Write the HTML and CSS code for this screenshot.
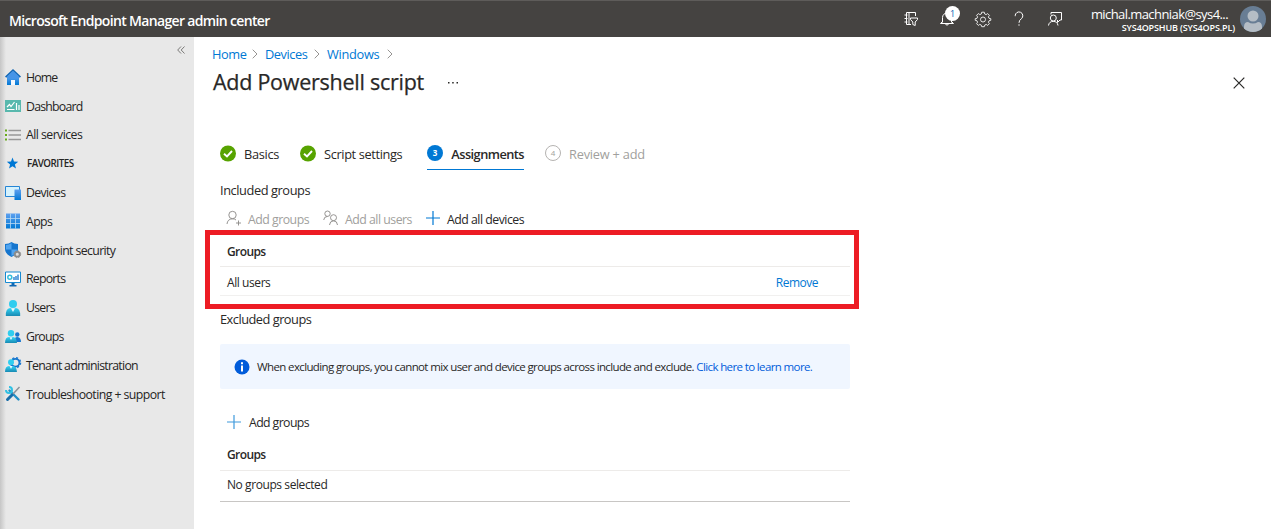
FILE: index.html
```
<!DOCTYPE html>
<html lang="en">
<head>
<meta charset="utf-8">
<title>Add Powershell script - Microsoft Endpoint Manager admin center</title>
<link rel="stylesheet" href="styles.css">
</head>
<body>
<header class="topbar">
  <div class="brand">Microsoft Endpoint Manager admin center</div>
  <div class="tools">
    <svg class="tool" viewBox="0 0 18 18"><path d="M13.5 6V2.5H4.500V14.500H9M7 2.500V14.500M2.500 5H5.500M2.500 8.500H5.500M2.500 12H5.500M8.500 8H15.500V9.500L13.200 12V15.500L10.800 14.500V12L8.500 9.500Z"/></svg>
    <div class="bell"><svg class="tool" viewBox="0 0 18 18"><path d="M4.500 12.500V7.500A4.500 4.500 0 0 1 13.500 7.500V12.500M2.500 13.500L4.500 11.500M15.500 13.500L13.500 11.500M2.500 13.500H15.500M7.500 14A1.600 1.600 0 0 0 10.500 14"/></svg><span class="badge">1</span></div>
    <svg class="tool gear" viewBox="0 0 18 18"><path d="M7.700 2.200H10.300L10.700 4L12.100 4.600L13.700 3.600L15.400 5.300L14.400 6.900L15 8.300L16.800 8.700V10.300L15 10.800L14.400 12.200L15.400 13.700L13.700 15.400L12.200 14.400L10.800 15L10.300 16.700H7.700L7.200 15L5.800 14.400L4.300 15.400L2.600 13.700L3.600 12.200L3 10.800L1.200 10.300V8.700L3 8.300L3.600 6.900L2.600 5.300L4.300 3.600L5.900 4.600L7.300 4Z"/><circle cx="9" cy="9.500" r="2.500"/></svg>
    <svg class="tool" viewBox="0 0 18 18"><path d="M5.200 6.200V5.800A3.800 3.800 0 1 1 11.500 8.600Q9 10.300 9 12.800M9 14.300V15.700"/></svg>
    <svg class="tool" viewBox="0 0 18 18"><circle cx="7.300" cy="8" r="3"/><path d="M2.500 15.500A4.800 4.800 0 0 1 12 15.500M5 4.500V2.500H15.500V10H14L11.500 12.500V10"/></svg>
  </div>
  <div class="account"><div class="mail">michal.machniak@sys4...</div><div class="tenant">SYS4OPSHUB (SYS4OPS.PL)</div></div>
  <svg class="avatar" viewBox="0 0 26 26"><defs><clipPath id="disc"><circle cx="13" cy="13" r="13"/></clipPath></defs><g clip-path="url(#disc)"><path fill="#687d94" d="M0 0H26V26H0Z"/><circle cx="13" cy="10" r="5.500" fill="#b5bdc5"/><path fill="#b5bdc5" d="M4 26V21Q4 16 8 16Q13 19 18 16Q22 16 22 21V26Z"/></g></svg>
</header>
<div class="shell">
  <nav class="sidebar">
    <svg class="collapse" viewBox="0 0 8 8"><path d="M4 .5L.7 4L4 7.500M7.500 .5L4.200 4L7.500 7.500"/></svg>
    <svg width="0" height="0" class="defs"><defs>
      <linearGradient id="blue" x2="0" y2="1"><stop stop-color="#5ea0ef"/><stop offset="1" stop-color="#0078d4"/></linearGradient>
      <linearGradient id="cyan" x2="0" y2="1"><stop stop-color="#32d4f5"/><stop offset="1" stop-color="#198ab3"/></linearGradient>
    </defs></svg>
    <a class="item"><svg viewBox="0 0 16 16"><path fill="url(#blue)" d="M2 7H14V16H10V11H6V16H2Z"/><path fill="#1267b4" d="M8 0L16 7.500L14.800 8.800L8 2.500L1.200 8.800L0 7.500Z"/><path fill="#4594e7" d="M8 1.700L14 7.500V9H2V7.500Z"/><path fill="#f5f9fe" d="M6 11H10V16H6Z"/></svg><span class="n-home">Home</span></a>
    <a class="item"><svg viewBox="0 0 16 16"><path fill="#58b8ad" d="M0 2H16V14H0Z"/><path stroke="#fff" fill="none" d="M2 9L4.500 6.500L6 8.500L9.500 4M2 11.500H9.500M11.500 5V12M14 7V12" stroke-width="1.200"/></svg><span class="n-dash">Dashboard</span></a>
    <a class="item"><svg viewBox="0 0 16 16"><path stroke="#979797" stroke-width="1.300" d="M3.500 3.500H16M3.500 8H16M3.500 12.500H16"/><path stroke="#68a91c" stroke-width="2" d="M0 3.500H2M0 8H2M0 12.500H2"/></svg><span class="n-serv">All services</span></a>
    <div class="item fav"><svg viewBox="0 0 16 16"><path fill="#0078d4" d="M7.500 1.500L9 5.500L13.200 5.800L9.900 8.400L11 12.500L7.500 10.200L4 12.500L5.100 8.400L1.800 5.800L6 5.500Z"/></svg><span>FAVORITES</span></div>
    <a class="item"><svg viewBox="0 0 16 16"><path fill="#d5f2fd" stroke="#2585d5" d="M.5 1.500H14.500V11.500H.5Z"/><path fill="url(#blue)" d="M9.500 4.500H16V15H9.500Z"/></svg><span class="n-dev">Devices</span></a>
    <a class="item"><svg viewBox="0 0 16 16"><path fill="url(#blue)" d="M1 .5H15V15.500H1Z"/><path stroke="#b9d9f3" stroke-width=".8" d="M5.500 .5V15.500M10.500 .5V15.500M1 5.500H15M1 10.500H15"/></svg><span class="n-apps">Apps</span></a>
    <a class="item"><svg viewBox="0 0 16 16"><path fill="#1676ce" d="M6.500 0Q9 2 13 2V7Q13 12 6.500 15Q0 12 0 7V2Q4 2 6.500 0"/><path fill="#50a4ef" d="M6.500 1V7.500H1V3Q4 3 6.500 1M6.500 7.500H12Q12 11 6.500 14Z"/><circle cx="12.300" cy="12.300" r="2.400" fill="#ddd" stroke="#8b8b8b" stroke-width="1.700"/><circle cx="12.300" cy="12.300" r="3.400" fill="none" stroke="#8b8b8b" stroke-width="1" stroke-dasharray="1.500 1.170"/></svg><span class="n-sec">Endpoint security</span></a>
    <a class="item"><svg viewBox="0 0 16 16"><path fill="#fff" stroke="#168ad2" d="M.5 1H15.500V11.500H.5Z"/><circle cx="4.800" cy="6.200" r="2" fill="none" stroke="#35bddb" stroke-width="1.500"/><path stroke="#1676ce" stroke-width="1.300" d="M9 9V6M11 9V5M13 9V3.500"/><path fill="#0f68b4" d="M6.500 12H9.500V14H11.500V15.500H4.500V14H6.500Z"/></svg><span class="n-rep">Reports</span></a>
    <a class="item"><svg viewBox="0 0 16 16"><circle cx="8" cy="4" r="4" fill="#30cdef"/><path fill="url(#cyan)" d="M.8 16Q.5 8.500 5 8L8 9L11 8Q15.500 8.500 15.200 16Z"/><path fill="#e8fbff" d="M6 8.500H10L8 12Z"/></svg><span class="n-users">Users</span></a>
    <a class="item"><svg viewBox="0 0 16 16"><circle cx="12.300" cy="5.500" r="2.200" fill="#1676ce"/><path fill="#1676ce" d="M8.500 13Q9 8 12.500 8Q16 8.500 16 13Z"/><circle cx="6" cy="4.300" r="3.200" fill="#30cdef"/><path fill="url(#cyan)" d="M0 14Q0 8 4 8H8Q11.500 8 12 14Z"/><path fill="#e8fbff" d="M4.500 8.200H7.500L6 11Z"/></svg><span class="n-grp">Groups</span></a>
    <a class="item"><svg viewBox="0 0 16 16"><circle cx="10.500" cy="5.700" r="3.900" fill="none" stroke="#1676ce" stroke-width="1.800"/><circle cx="10.500" cy="5.700" r="5" fill="none" stroke="#1676ce" stroke-width="1.500" stroke-dasharray="2 1.930"/><circle cx="6" cy="5.200" r="3" fill="#30cdef"/><path fill="url(#cyan)" d="M0 15Q0 9 4 9H8Q11.500 9 12 15Z"/><path fill="#e8fbff" d="M4.500 9H7.500L6 12Z"/></svg><span class="n-ten">Tenant administration</span></a>
    <a class="item"><svg viewBox="0 0 16 16"><path fill="none" stroke="#228fc6" stroke-width="2.400" stroke-linecap="round" d="M4.500 4.500L13.500 13.500"/><path fill="none" stroke="#2fc1e4" stroke-width="2" d="M4 1A3 3 0 1 1 1 4"/><path stroke="#8a9299" stroke-width="1.500" d="M14.500 1L8 8"/><path stroke="#186da9" stroke-width="3" stroke-linecap="round" d="M7 9L2.500 13.500"/></svg><span class="n-tro">Troubleshooting + support</span></a>
  </nav>
  <main class="content">
    <div class="crumbs"><a class="c1">Home</a><svg viewBox="0 0 6 10"><path d="M.7 .7L5 5L.7 9.300"/></svg><a class="c2">Devices</a><svg viewBox="0 0 6 10"><path d="M.7 .7L5 5L.7 9.300"/></svg><a class="c3">Windows</a><svg viewBox="0 0 6 10"><path d="M.7 .7L5 5L.7 9.300"/></svg></div>
    <div class="titlebar"><h1>Add Powershell script</h1><svg class="more" viewBox="0 0 12 4"><path d="M1 1H2.500V2.500H1ZM5.200 1H6.700V2.500H5.200ZM9.500 1H11V2.500H9.500Z"/></svg><svg class="close" viewBox="0 0 12 12"><path d="M.7 .7L11.300 11.300M11.300 .7L.7 11.300"/></svg></div>
    <div class="form">
      <div class="steps">
        <div class="step s1"><svg viewBox="0 0 16 16"><circle cx="8" cy="7.500" r="8" fill="#57a300"/><path d="M4 7.700L7 10.500L12 5" fill="none" stroke="#fff" stroke-width="1.900"/></svg><span>Basics</span></div>
        <div class="step s2"><svg viewBox="0 0 16 16"><circle cx="8" cy="7.500" r="8" fill="#57a300"/><path d="M4 7.700L7 10.500L12 5" fill="none" stroke="#fff" stroke-width="1.900"/></svg><span class="t-script">Script settings</span></div>
        <div class="step s3 active"><i>3</i><span>Assignments</span></div>
        <div class="step s4 pending"><i>4</i><span>Review + add</span></div>
      </div>
      <div class="heading"><span class="t-inc">Included groups</span></div>
      <div class="actions">
        <div class="act a1 off"><svg viewBox="0 0 16 16"><circle cx="6.500" cy="4" r="3.700"/><path d="M1 13Q1.500 8 6.500 7.800Q8.700 7.800 10 9M12.500 9.500V14.500M10 12H15"/></svg><span class="t-ag">Add groups</span></div>
        <div class="act a2 off"><svg viewBox="0 0 16 16"><circle cx="4.500" cy="2.700" r="2.700"/><path d="M.7 9Q1 5.500 4.500 5.400M6.500 14Q6.800 10 10.500 9.800Q14.300 10 14.500 14"/><circle cx="10.500" cy="6.700" r="3"/></svg><span class="t-au">Add all users</span></div>
        <div class="act a3"><svg class="plus" viewBox="0 0 14 14"><path d="M7 -1V13M0 6H14"/></svg><span class="t-ad">Add all devices</span></div>
      </div>
      <section class="table included">
        <div class="th"><span class="t-g">Groups</span></div>
        <div class="tr"><span class="t-all">All users</span><a class="t-rem">Remove</a></div>
        <div class="highlight"></div>
      </section>
      <div class="heading exhead"><span class="t-exc">Excluded groups</span></div>
      <div class="info"><svg viewBox="0 0 16 16"><circle cx="8" cy="8" r="7.500" fill="#015cda"/><path fill="#fff" d="M7 3.200H9V5.200H7ZM7 6.500H9V12.500H7Z"/></svg><span>When excluding groups, you cannot mix user and device groups across include and exclude. <a>Click here to learn more.</a></span></div>
      <div class="act addex"><svg class="plus light" viewBox="0 0 14 14"><path d="M7 0V14M0 7H14"/></svg><span class="t-ag">Add groups</span></div>
      <section class="table excluded">
        <div class="th"><span class="t-g">Groups</span></div>
        <div class="tr"><span class="t-no">No groups selected</span></div>
      </section>
    </div>
  </main>
</div>
</body>
</html>
```
FILE: styles.css
```
* { box-sizing: border-box; }
body { margin: 0; width: 1271px; height: 529px; overflow: hidden; background: #fff; color: #292827; font: 12.300px "Open Sans", "Noto Sans", sans-serif; white-space: nowrap; letter-spacing: -.3px; }
svg { display: block; flex: none; overflow: visible; }
a { color: #0078d4; text-decoration: none; }
.topbar { height: 37px; display: flex; align-items: center; background: #454341; border-top: 1px solid #5e5c5a; color: #fff; padding-right: 5px; }
.brand { width: 902px; padding: 2px 0 0 9px; font-size: 14px; font-weight: 600; letter-spacing: -.66px; }
.tools { display: flex; gap: 18px; }
.tool { width: 18px; height: 18px; fill: none; stroke: #fff; stroke-width: 1; }
.gear { stroke-width: .85; }
.bell { position: relative; }
.badge { position: absolute; left: 7px; top: -4px; width: 15px; height: 15px; border-radius: 50%; background: #fff; color: #0064b5; text-align: center; font-size: 9px; line-height: 15px; letter-spacing: 0; }
.account { margin-left: auto; padding: 2px 5px 0 0; text-align: right; }
.mail { font-size: 13px; line-height: 16px; letter-spacing: -.58px; padding-right: 7px; }
.tenant { font-size: 9px; line-height: 12px; font-weight: 600; letter-spacing: -.13px; }
.avatar { width: 26px; height: 26px; }
.shell { display: flex; height: 492px; }
.sidebar { width: 194px; background: linear-gradient(90deg, #c6c6c6, #e8e8e8 6px); }
.collapse { width: 8px; height: 8px; margin: 9px 0 9px 177px; fill: none; stroke: #605e5c; stroke-width: .8; }
.defs { position: absolute; }
.item { height: 28.800px; display: flex; align-items: center; gap: 5px; padding-left: 5px; color: #252423; }
.item svg { width: 16px; height: 16px; }
.n-home { letter-spacing: -.85px; }
.n-dash { letter-spacing: -.77px; }
.n-serv { letter-spacing: -.55px; }
.n-dev { letter-spacing: -.62px; }
.n-apps { letter-spacing: -.6px; }
.n-sec { letter-spacing: -.62px; }
.n-rep { letter-spacing: -.78px; }
.n-users { letter-spacing: -.75px; }
.n-grp { letter-spacing: -.8px; }
.n-ten { letter-spacing: -.73px; }
.n-tro { letter-spacing: -.56px; }
.fav { font-size: 9.800px; font-weight: 600; gap: 6px; letter-spacing: -.5px; }
.content { flex: 1; padding-left: 18px; }
.crumbs { height: 34px; display: flex; align-items: center; font-size: 12.800px; letter-spacing: -.45px; }
.crumbs svg { width: 6px; height: 10px; fill: none; stroke: #8a8886; stroke-width: .9; margin-right: 7px; }
.c1 { width: 40px; } .c2 { width: 49px; } .c3 { width: 60px; letter-spacing: -.3px; }
.titlebar { display: flex; align-items: center; height: 24px; }
h1 { margin: 0; width: 235px; padding: 0 0 3px 1px; font-size: 21.500px; font-weight: 400; letter-spacing: -.26px; -webkit-text-stroke: .25px #292827; }
.more { width: 12px; height: 4px; fill: #292827; }
.close { width: 12px; height: 12px; margin: 0 26px 0 auto; fill: none; stroke: #292827; stroke-width: 1.200; }
.form { width: 638px; padding: 42px 0 0 8px; }
.steps { display: flex; height: 33px; font-size: 12.800px; }
.step { display: flex; align-items: center; height: 33px; gap: 8px; }
.step svg { width: 16px; height: 16px; }
.step i { width: 16px; height: 16px; border-radius: 50%; background: #0078d4; color: #fff; font: 700 8px/16px "Open Sans", sans-serif; text-align: center; letter-spacing: 0; margin-bottom: 2px; }
.s1 { width: 80px; } .s2 { width: 127px; letter-spacing: -.37px; }
.s3 { width: 97px; border-bottom: 1px solid #0078d4; margin-right: 21px; font-weight: 600; padding-top: 1px; letter-spacing: -.55px; }
.s3.step { gap: 8px; justify-content: space-between; }
.pending { color: #a19f9d; letter-spacing: -.22px; }
.step.pending i { background: #fff; color: #a19f9d; border: 1px solid #b5b3b1; line-height: 14px; font-weight: 400; }
.heading { height: 40px; display: flex; align-items: center; font-size: 12.800px; letter-spacing: -.42px; }
.actions { height: 18px; display: flex; }
.act { display: flex; align-items: center; height: 18px; letter-spacing: -.5px; }
.act svg { width: 16px; height: 16px; fill: none; stroke: #8a8886; stroke-width: .9; margin-right: 6px; }
.act .plus { width: 14px; height: 14px; stroke: #0078d4; stroke-width: 1.200; margin-right: 7px; }
.act .light { stroke: #3f9adc; margin-right: 8px; }
.off { color: #a19f9d; }
.a1 { width: 103px; padding-left: 6px; }
.a2 { width: 103px; }
.table { width: 630px; }
.included { position: relative; margin-top: 8px; }
.th { height: 31px; display: flex; align-items: center; padding-left: 7px; font-weight: 600; font-size: 12px; letter-spacing: -.6px; border-bottom: 1px solid #edebe9; }
.tr { height: 29px; display: flex; align-items: center; justify-content: space-between; padding: 2px 32px 0 7px; border-bottom: 1px solid #f1f0ef; font-size: 12px; letter-spacing: -.42px; }
.included .t-rem { letter-spacing: -.5px; }
.highlight { position: absolute; left: -15px; top: -6px; width: 654px; height: 79px; border: 5px solid #ed1c24; }
.exhead { height: 48px; padding-bottom: 2px; letter-spacing: -.5px; }
.info { width: 630px; height: 45px; display: flex; align-items: center; background: #f0f6ff; border-radius: 2px; padding-left: 14px; gap: 7px; font-size: 11.500px; letter-spacing: -.625px; }
.info svg { width: 16px; height: 16px; }
.info a { color: #015cda; }
.addex { margin-top: 24px; padding-left: 7px; }
.addex .t-ag { letter-spacing: -.6px; }
.excluded { margin-top: 9px; }
.excluded .th { padding-bottom: 2px; }
.excluded .tr { height: 31px; border-color: #c8c6c4; padding: 0 7px 4px; }
```
